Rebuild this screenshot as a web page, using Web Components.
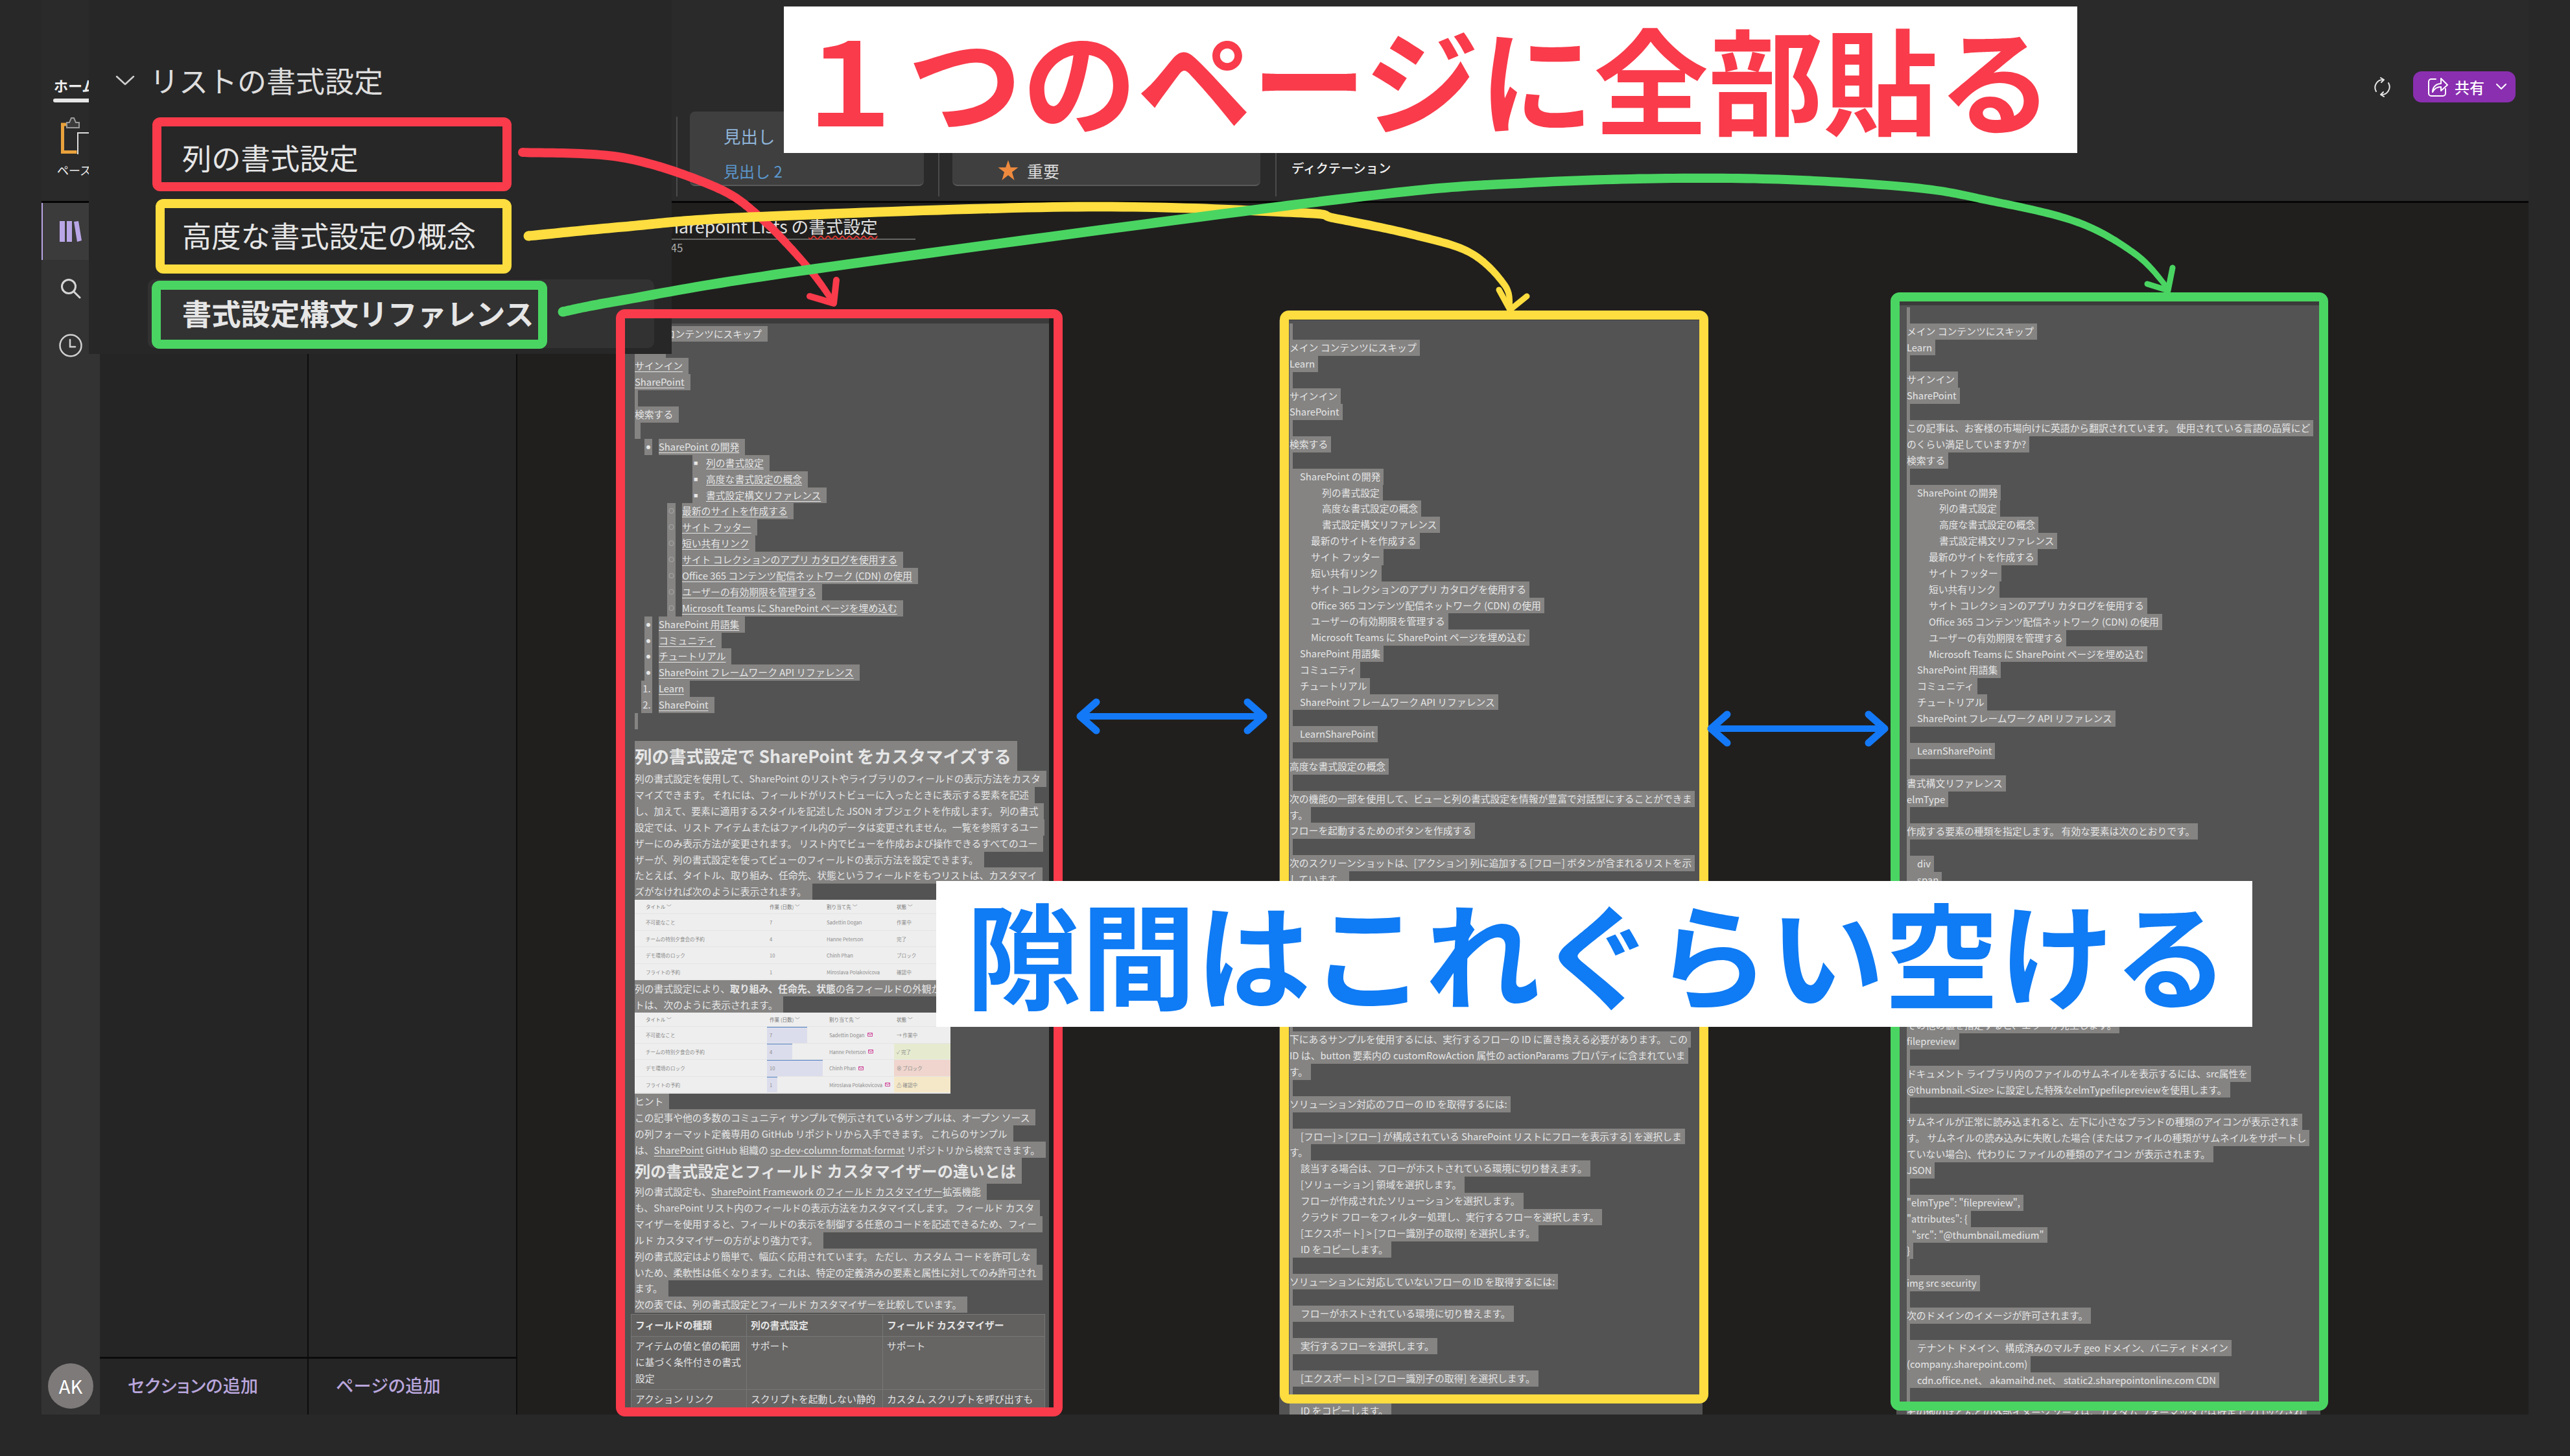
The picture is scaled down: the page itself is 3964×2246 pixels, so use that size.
<!DOCTYPE html>
<html lang="ja">
<head>
<meta charset="utf-8">
<title>OneNote</title>
<style>
  html, body { margin: 0; padding: 0; background: #282828; }
  body { width: 3964px; height: 2246px; overflow: hidden; position: relative; font-family: "Noto Sans CJK JP", "Noto Sans", sans-serif; color: #e4e4e4; }
  u { text-underline-offset: 3px; text-decoration-thickness: 1px; }
</style>
</head>
<body>

<one-app>
  <top-ribbon slot="ribbon"></top-ribbon>
  <nav-rail slot="rail"></nav-rail>
  <nav-col slot="sections" label="セクションの追加"></nav-col>
  <nav-col slot="pages" label="ページの追加" pad="42"></nav-col>
  <page-area slot="page">

    <paste-column style="--w:661px;--top:27px;--strip:8px;--pt:3.6px;--row:24.9px;--pr:9px;--edge:6px">
      <sel-line>メイン コンテンツにスキップ</sel-line>
      <sel-line>Learn</sel-line>
      <sel-line><u>サインイン</u></sel-line>
      <sel-line><u>SharePoint</u></sel-line>
      <sel-line blank></sel-line>
      <sel-line>検索する</sel-line>
      <sel-line blank style="--stub:9px"></sel-line>
      <sel-line level="1" mk="●"><u>SharePoint の開発</u></sel-line>
      <sel-line level="3" mk="■"><u>列の書式設定</u></sel-line>
      <sel-line level="3" mk="■"><u>高度な書式設定の概念</u></sel-line>
      <sel-line level="3" mk="■"><u>書式設定構文リファレンス</u></sel-line>
      <sel-line level="2" mk="○"><u>最新のサイトを作成する</u></sel-line>
      <sel-line level="2" mk="○"><u>サイト フッター</u></sel-line>
      <sel-line level="2" mk="○"><u>短い共有リンク</u></sel-line>
      <sel-line level="2" mk="○"><u>サイト コレクションのアプリ カタログを使用する</u></sel-line>
      <sel-line level="2" mk="○"><u>Office 365 コンテンツ配信ネットワーク (CDN) の使用</u></sel-line>
      <sel-line level="2" mk="○"><u>ユーザーの有効期限を管理する</u></sel-line>
      <sel-line level="2" mk="○"><u>Microsoft Teams に SharePoint ページを埋め込む</u></sel-line>
      <sel-line level="1" mk="●"><u>SharePoint 用語集</u></sel-line>
      <sel-line level="1" mk="●"><u>コミュニティ</u></sel-line>
      <sel-line level="1" mk="●"><u>チュートリアル</u></sel-line>
      <sel-line level="1" mk="●"><u>SharePoint フレームワーク API リファレンス</u></sel-line>
      <sel-line level="4" mk="1."><u>Learn</u></sel-line>
      <sel-line level="4" mk="2."><u>SharePoint</u></sel-line>
      <sel-line blank></sel-line>
      <div style="height:18.5px"></div>
      <sel-line style="--row:46px;font-size:26.5px;font-weight:700">列の書式設定で SharePoint をカスタマイズする</sel-line>
      <div style="--row:24.85px">
        <sel-line>列の書式設定を使用して、SharePoint のリストやライブラリのフィールドの表示方法をカスタ</sel-line>
        <sel-line>マイズできます。 それには、フィールドがリストビューに入ったときに表示する要素を記述</sel-line>
        <sel-line>し、加えて、要素に適用するスタイルを記述した JSON オブジェクトを作成します。 列の書式</sel-line>
        <sel-line>設定では、リスト アイテムまたはファイル内のデータは変更されません。一覧を参照するユー</sel-line>
        <sel-line>ザーにのみ表示方法が変更されます。 リスト内でビューを作成および操作できるすべてのユー</sel-line>
        <sel-line>ザーが、列の書式設定を使ってビューのフィールドの表示方法を設定できます。</sel-line>
        <sel-line>たとえば、タイトル、取り組み、任命先、状態というフィールドをもつリストは、カスタマイ</sel-line>
        <sel-line>ズがなければ次のように表示されます。</sel-line>
      </div>
      <mini-list></mini-list>
      <div style="--row:25px">
        <sel-line>列の書式設定により、<b>取り組み、任命先、状態</b>の各フィールドの外観が変更され、リス</sel-line>
        <sel-line>トは、次のように表示されます。</sel-line>
      </div>
      <mini-list fancy></mini-list>
      <sel-line style="--row:24px">ヒント</sel-line>
      <div style="--row:25px">
        <sel-line>この記事や他の多数のコミュニティ サンプルで例示されているサンプルは、オープン ソース</sel-line>
        <sel-line>の列フォーマット定義専用の GitHub リポジトリから入手できます。 これらのサンプル</sel-line>
        <sel-line>は、<u>SharePoint</u> GitHub 組織の <u>sp-dev-column-format-format</u> リポジトリから検索できます。</sel-line>
      </div>
      <sel-line style="--row:40px;font-size:24.3px;font-weight:700">列の書式設定とフィールド カスタマイザーの違いとは</sel-line>
      <div style="--row:24.9px">
        <sel-line>列の書式設定も、<u>SharePoint Framework のフィールド カスタマイザー</u>拡張機能</sel-line>
        <sel-line>も、SharePoint リスト内のフィールドの表示方法をカスタマイズします。 フィールド カスタ</sel-line>
        <sel-line>マイザーを使用すると、フィールドの表示を制御する任意のコードを記述できるため、フィー</sel-line>
        <sel-line>ルド カスタマイザーの方がより強力です。</sel-line>
        <sel-line>列の書式設定はより簡単で、幅広く応用されています。 ただし、カスタム コードを許可しな</sel-line>
        <sel-line>いため、柔軟性は低くなります。これは、特定の定義済みの要素と属性に対してのみ許可され</sel-line>
        <sel-line>ます。</sel-line>
        <sel-line>次の表では、列の書式設定とフィールド カスタマイザーを比較しています。</sel-line>
      </div>
      <compare-table></compare-table>
    </paste-column>

    <paste-column style="--w:653px;--top:29px;--gap:349px;--strip:1px;--pt:5.2px;--row:24.85px;--pr:5px">
      <sel-line blank></sel-line>
      <sel-line>メイン コンテンツにスキップ</sel-line>
      <sel-line>Learn</sel-line>
      <sel-line blank></sel-line>
      <sel-line>サインイン</sel-line>
      <sel-line>SharePoint</sel-line>
      <sel-line blank></sel-line>
      <sel-line>検索する</sel-line>
      <sel-line blank></sel-line>
      <sel-line i="16">SharePoint の開発</sel-line>
      <sel-line i="50">列の書式設定</sel-line>
      <sel-line i="50">高度な書式設定の概念</sel-line>
      <sel-line i="50">書式設定構文リファレンス</sel-line>
      <sel-line i="33">最新のサイトを作成する</sel-line>
      <sel-line i="33">サイト フッター</sel-line>
      <sel-line i="33">短い共有リンク</sel-line>
      <sel-line i="33">サイト コレクションのアプリ カタログを使用する</sel-line>
      <sel-line i="33">Office 365 コンテンツ配信ネットワーク (CDN) の使用</sel-line>
      <sel-line i="33">ユーザーの有効期限を管理する</sel-line>
      <sel-line i="33">Microsoft Teams に SharePoint ページを埋め込む</sel-line>
      <sel-line i="16">SharePoint 用語集</sel-line>
      <sel-line i="16">コミュニティ</sel-line>
      <sel-line i="16">チュートリアル</sel-line>
      <sel-line i="16">SharePoint フレームワーク API リファレンス</sel-line>
      <sel-line blank></sel-line>
      <sel-line i="16">LearnSharePoint</sel-line>
      <sel-line blank></sel-line>
      <sel-line>高度な書式設定の概念</sel-line>
      <sel-line blank></sel-line>
      <sel-line>次の機能の一部を使用して、ビューと列の書式設定を情報が豊富で対話型にすることができま</sel-line>
      <sel-line>す。</sel-line>
      <sel-line>フローを起動するためのボタンを作成する</sel-line>
      <sel-line blank></sel-line>
      <sel-line>次のスクリーンショットは、[アクション] 列に追加する [フロー] ボタンが含まれるリストを示</sel-line>
      <sel-line>しています。</sel-line>
      <sel-line blank style="--row:222.5px"></sel-line>
      <div style="--row:24.9px">
        <sel-line>下にあるサンプルを使用するには、実行するフローの ID に置き換える必要があります。 この</sel-line>
        <sel-line>ID は、button 要素内の customRowAction 属性の actionParams プロパティに含まれていま</sel-line>
        <sel-line>す。</sel-line>
        <sel-line blank></sel-line>
        <sel-line>ソリューション対応のフローの ID を取得するには:</sel-line>
        <sel-line blank></sel-line>
        <sel-line i="17">[フロー] > [フロー] が構成されている SharePoint リストにフローを表示する] を選択しま</sel-line>
        <sel-line>す。</sel-line>
        <sel-line i="17">該当する場合は、フローがホストされている環境に切り替えます。</sel-line>
        <sel-line i="17">[ソリューション] 領域を選択します。</sel-line>
        <sel-line i="17">フローが作成されたソリューションを選択します。</sel-line>
        <sel-line i="17">クラウド フローをフィルター処理し、実行するフローを選択します。</sel-line>
        <sel-line i="17">[エクスポート] > [フロー識別子の取得] を選択します。</sel-line>
        <sel-line i="17">ID をコピーします。</sel-line>
        <sel-line blank></sel-line>
        <sel-line>ソリューションに対応していないフローの ID を取得するには:</sel-line>
        <sel-line blank></sel-line>
        <sel-line i="17">フローがホストされている環境に切り替えます。</sel-line>
        <sel-line blank></sel-line>
        <sel-line i="17">実行するフローを選択します。</sel-line>
        <sel-line blank></sel-line>
        <sel-line i="17">[エクスポート] > [フロー識別子の取得] を選択します。</sel-line>
        <sel-line blank></sel-line>
        <sel-line i="17">ID をコピーします。</sel-line>
      </div>
    </paste-column>

    <paste-column style="--w:654px;--top:0px;--gap:299px;--strip:7px;--pt:2.8px;--row:24.9px;--pr:5px">
      <sel-line blank></sel-line>
      <sel-line>メイン コンテンツにスキップ</sel-line>
      <sel-line>Learn</sel-line>
      <sel-line blank></sel-line>
      <sel-line>サインイン</sel-line>
      <sel-line>SharePoint</sel-line>
      <sel-line blank></sel-line>
      <sel-line>この記事は、お客様の市場向けに英語から翻訳されています。 使用されている言語の品質にど</sel-line>
      <sel-line>のくらい満足していますか?</sel-line>
      <sel-line>検索する</sel-line>
      <sel-line blank></sel-line>
      <sel-line i="16">SharePoint の開発</sel-line>
      <sel-line i="50">列の書式設定</sel-line>
      <sel-line i="50">高度な書式設定の概念</sel-line>
      <sel-line i="50">書式設定構文リファレンス</sel-line>
      <sel-line i="34">最新のサイトを作成する</sel-line>
      <sel-line i="34">サイト フッター</sel-line>
      <sel-line i="34">短い共有リンク</sel-line>
      <sel-line i="34">サイト コレクションのアプリ カタログを使用する</sel-line>
      <sel-line i="34">Office 365 コンテンツ配信ネットワーク (CDN) の使用</sel-line>
      <sel-line i="34">ユーザーの有効期限を管理する</sel-line>
      <sel-line i="34">Microsoft Teams に SharePoint ページを埋め込む</sel-line>
      <sel-line i="16">SharePoint 用語集</sel-line>
      <sel-line i="16">コミュニティ</sel-line>
      <sel-line i="16">チュートリアル</sel-line>
      <sel-line i="16">SharePoint フレームワーク API リファレンス</sel-line>
      <sel-line blank></sel-line>
      <sel-line i="16">LearnSharePoint</sel-line>
      <sel-line blank></sel-line>
      <sel-line>書式構文リファレンス</sel-line>
      <sel-line>elmType</sel-line>
      <sel-line blank></sel-line>
      <sel-line>作成する要素の種類を指定します。 有効な要素は次のとおりです。</sel-line>
      <sel-line blank></sel-line>
      <sel-line i="16">div</sel-line>
      <sel-line i="16">span</sel-line>
      <sel-line i="16">a</sel-line>
      <sel-line i="16">img</sel-line>
      <sel-line i="16">svg</sel-line>
      <sel-line i="16">path</sel-line>
      <sel-line i="16">button</sel-line>
      <sel-line i="16">p</sel-line>
      <sel-line i="16">filepreview</sel-line>
      <sel-line blank></sel-line>
      <sel-line>その他の値を指定すると、エラーが発生します。</sel-line>
      <sel-line>filepreview</sel-line>
      <sel-line blank></sel-line>
      <sel-line>ドキュメント ライブラリ内のファイルのサムネイルを表示するには、src属性を</sel-line>
      <sel-line>@thumbnail.&lt;Size&gt; に設定した特殊なelmTypefilepreviewを使用します。</sel-line>
      <sel-line blank></sel-line>
      <sel-line>サムネイルが正常に読み込まれると、左下に小さなブランドの種類のアイコンが表示されま</sel-line>
      <sel-line>す。 サムネイルの読み込みに失敗した場合 (またはファイルの種類がサムネイルをサポートし</sel-line>
      <sel-line>ていない場合)、代わりに ファイルの種類のアイコン が表示されます。</sel-line>
      <sel-line>JSON</sel-line>
      <sel-line blank></sel-line>
      <sel-line>"elmType": "filepreview",</sel-line>
      <sel-line>"attributes": {</sel-line>
      <sel-line i="8">"src": "@thumbnail.medium"</sel-line>
      <sel-line>}</sel-line>
      <sel-line blank></sel-line>
      <sel-line>img src security</sel-line>
      <sel-line blank></sel-line>
      <sel-line>次のドメインのイメージが許可されます。</sel-line>
      <sel-line blank></sel-line>
      <sel-line i="16">テナント ドメイン、構成済みのマルチ geo ドメイン、バニティ ドメイン</sel-line>
      <sel-line>(company.sharepoint.com)</sel-line>
      <sel-line i="16">cdn.office.net、 akamaihd.net、 static2.sharepointonline.com CDN</sel-line>
      <sel-line blank></sel-line>
      <sel-line>その他のほとんどの外部イメージ ソースは、カスタム フォーマッタでは既定でブロックされ</sel-line>
    </paste-column>

  </page-area>
</one-app>

<flyout-panel title-text="リストの書式設定">
  <flyout-row>列の書式設定</flyout-row>
  <flyout-row>高度な書式設定の概念</flyout-row>
  <flyout-row selected>書式設定構文リファレンス</flyout-row>
</flyout-panel>

<note-layer></note-layer>

<script>
function makeShadow(el, html) {
    const root = el.attachShadow({ mode: "open" });
    root.innerHTML = html;
    return root;
}

class OneApp extends HTMLElement {
    constructor() {
        super();
        makeShadow(this, `
            <style>
                :host { display: flex; flex-direction: column; width: 3900px; height: 2182px; margin-left: 0; padding-left: 64px; box-sizing: border-box; }
                .bar { height: 310px; flex: none; }
                .body { flex: 1; min-height: 0; display: flex; border-top: 3px solid #050505; }
            </style>
            <div class="bar"><slot name="ribbon"></slot></div>
            <div class="body">
                <slot name="rail"></slot>
                <slot name="sections"></slot>
                <slot name="pages"></slot>
                <slot name="page"></slot>
            </div>
        `);
    }
}

class TopRibbon extends HTMLElement {
    constructor() {
        super();
        makeShadow(this, `
            <style>
                :host { display: flex; align-items: flex-start; height: 310px; background: #2a2a2a; }
                .tools { width: 979px; flex: none; padding-left: 19px; box-sizing: border-box; color: #eee; }
                .tab { margin-top: 120px; font-size: 22px; line-height: 22px; font-weight: 700; white-space: nowrap; }
                .tab-bar { margin-top: 10px; height: 6px; width: 60px; border-radius: 3px; background: #e6e6e6; margin-left: -1px; }
                .paste { display: block; margin: 22px 0 0 11px; }
                .paste-label { margin: 14px 0 0 5px; font-size: 18px; line-height: 20px; white-space: nowrap; }
                .sep { flex: none; width: 2px; height: 123px; margin-top: 180px; background: #4b4b4b; }
                .box { flex: none; margin-top: 172px; height: 115px; box-sizing: border-box; background: #3f3f3f; border-radius: 8px; border-bottom: 2px solid #5a5a5a; }
                .heads { width: 361px; margin-left: 19px; padding-left: 52px; font-size: 26.5px; }
                .heads div:first-child { height: 76px; line-height: 76px; color: #8fb5da; }
                .heads div:last-child { height: 32px; line-height: 32px; color: #5b97cd; font-size: 24px; }
                .tags { width: 475px; margin-left: 20px; padding: 68px 0 0 70px; display: flex; align-items: center; height: 115px; }
                .tags span { margin-left: 13px; font-size: 25px; line-height: 38px; color: #ddd; }
                .dict { margin: 246px 0 0 23px; font-size: 19.4px; line-height: 26px; color: #f2f2f2; font-weight: 500; white-space: nowrap; }
                .right { margin-left: auto; margin-top: 110px; display: flex; align-items: center; gap: 34px; padding-right: 20px; }
                .share { width: 158px; height: 48px; border-radius: 13px; background: #8a2fb0; color: #fff; display: flex; align-items: center; box-sizing: border-box; padding-left: 22px; font-size: 23px; font-weight: 500; }
                .share b { font-weight: 500; margin: 0 18px 0 10px; }
            </style>
            <div class="tools">
                <div class="tab">ホーム</div>
                <div class="tab-bar"></div>
                <svg class="paste" width="60" height="58" viewBox="0 0 60 58" fill="none">
                    <path d="M9 12H2.500v42.500h22" stroke="#e8a23c" stroke-width="5"/>
                    <path d="M9 17V9h4l3-7h4l3 7h5v8z" stroke="#9a9a9a" stroke-width="2" fill="#3a3a3a"/>
                    <path d="M26 58V25h24v33" stroke="#ddd" stroke-width="2"/>
                </svg>
                <div class="paste-label">ペースト</div>
            </div>
            <div class="sep"></div>
            <div class="box heads"><div>見出し&emsp;1</div><div>見出し 2</div></div>
            <div class="sep" style="margin-left:22px"></div>
            <div class="box tags">
                <svg width="32" height="31" viewBox="0 0 30 30"><path fill="#ee8a3e" d="M15 0l3.700 11H30l-9.200 6.800L24.300 30 15 22.400 5.700 30l3.500-12.200L0 11h11.300z"/></svg>
                <span>重要</span>
            </div>
            <div class="sep" style="margin-left:23px"></div>
            <div class="dict">ディクテーション</div>
            <div class="right">
                <svg width="27" height="31" viewBox="0 0 27 31" fill="none" stroke="#e6e6e6" stroke-width="2" stroke-linecap="round" stroke-linejoin="round">
                    <path d="M4 22A12 12 0 0 1 15 4"/><path d="M11 1l5 3-4 4"/>
                    <path d="M23 9a12 12 0 0 1-11 18"/><path d="M16 30l-5-3 4-4"/>
                </svg>
                <div class="share">
                    <svg width="32" height="30" viewBox="0 0 32 30" fill="none" stroke="#fff" stroke-width="2" stroke-linecap="round" stroke-linejoin="round">
                        <path d="M13 3H6a4 4 0 0 0-4 4v18a4 4 0 0 0 4 4h18a4 4 0 0 0 4-4v-7"/>
                        <path d="M8 23c0-8 6-13 13-13V2l10 10-10 9v-6c-6 0-10 2-13 8z"/>
                    </svg>
                    <b>共有</b>
                    <svg width="16" height="10" viewBox="0 0 16 10" fill="none" stroke="#fff" stroke-width="2" stroke-linecap="round" stroke-linejoin="round"><path d="M1 1l7 7 7-7"/></svg>
                </div>
            </div>
        `);
    }
}

class NavRail extends HTMLElement {
    constructor() {
        super();
        makeShadow(this, `
            <style>
                :host { display: flex; flex-direction: column; width: 90px; flex: none; background: #333; box-sizing: border-box; }
                .item { height: 88px; display: flex; align-items: center; justify-content: center; flex: none; }
                .on { background: #3b3b3b; box-shadow: inset 2px 0 0 #b9a6e6; }
                .avatar { margin: auto 0 9px 10px; width: 70px; height: 70px; border-radius: 50%; background: #7d7a79; color: #fff; display: flex; align-items: center; justify-content: center; font-size: 29px; padding-bottom: 3px; box-sizing: border-box; }
            </style>
            <div class="item on">
                <svg width="34" height="32" viewBox="0 0 34 32" fill="#b9a6e6"><rect width="8" height="32"/><rect x="11" width="8" height="32"/><path d="M22 1l7-1 5 30-7 2z"/></svg>
            </div>
            <div class="item">
                <svg width="32" height="32" viewBox="0 0 32 32" fill="none" stroke="#d6d6d6" stroke-width="3" stroke-linecap="round"><circle cx="13" cy="13" r="10.500"/><path d="M21 21l9 9"/></svg>
            </div>
            <div class="item">
                <svg width="36" height="36" viewBox="0 0 36 36" fill="none" stroke="#d0d0d0" stroke-width="2.500" stroke-linecap="round"><circle cx="18" cy="18" r="16.500"/><path d="M17 9v11h8"/></svg>
            </div>
            <div class="avatar">AK</div>
        `);
    }
}

class NavCol extends HTMLElement {
    constructor() {
        super();
        const pad = this.getAttribute("pad") || "43";
        makeShadow(this, `
            <style>
                :host { display: flex; flex-direction: column; flex: none; width: 322px; box-sizing: border-box; background: #252525; border-right: 2px solid #0c0c0c; }
                .body { flex: 1; }
                .foot { height: 89px; flex: none; box-sizing: border-box; border-top: 3px solid #0c0c0c; display: flex; align-items: center; padding: 0 0 5px ${pad}px; color: #b9a6dc; font-size: 27px; font-weight: 500; white-space: nowrap; font-feature-settings: "palt"; letter-spacing: .3px; }
            </style>
            <div class="body"></div>
            <div class="foot">${this.getAttribute("label")}</div>
        `);
    }
}

class PageArea extends HTMLElement {
    constructor() {
        super();
        makeShadow(this, `
            <style>
                :host { display: flex; flex-direction: column; flex: 1; min-width: 0; height: 100%; background: #201f1e; overflow: hidden; }
                .title { margin: 17px 0 0 203px; width: 411px; height: 38px; line-height: 38px; font-size: 26.600px; color: #e2e2e2; border-bottom: 2px solid #666; white-space: nowrap; flex: none; box-sizing: content-box; padding-left: 0; text-indent: 14px; }
                .title em { font-style: normal; text-decoration: underline wavy #e2342f 1.500px; text-underline-offset: 3px; }
                .stamp { margin-left: 213px; height: 24px; line-height: 24px; font-size: 17px; color: #aaa; flex: none; }
                .row { display: flex; align-items: flex-start; padding-left: 165px; margin-top: 70px; }
            </style>
            <div class="title">Sharepoint Lists の<em>書式設定</em></div>
            <div class="stamp">12:45</div>
            <div class="row"><slot></slot></div>
        `);
    }
}

class PasteColumn extends HTMLElement {
    constructor() {
        super();
        makeShadow(this, `
            <style>
                :host { display: block; flex: none; width: var(--w); box-sizing: border-box; margin-top: var(--top); margin-left: var(--gap, 0); background: #535353; border-right: var(--edge, 0) solid #1f1f1f; font-size: 14.800px; color: #e6e6e6; }
                .strip { height: var(--strip); background: #3b3b3b; }
                .body { padding: var(--pt) 0 0 16px; }
            </style>
            <div class="strip"></div>
            <div class="body"><slot></slot></div>
        `);
    }
}

class SelLine extends HTMLElement {
    constructor() {
        super();
        const root = makeShadow(this, `
            <style>
                :host { display: block; height: var(--row); white-space: nowrap; }
                .line { display: flex; height: 100%; }
                .mk { display: none; height: 100%; line-height: var(--row); background: #858483; text-align: center; flex: none; font-size: 6.500px; }
                .hl { display: block; height: 100%; line-height: var(--row); background: #858483; padding-right: var(--pr); }
                :host([blank]) .hl { padding: 0; width: var(--stub, 5px); }
                :host([level]) .mk { display: block; }
                :host([level="1"]) .mk { margin-left: 15px; width: 12px; }
                :host([level="1"]) .hl { margin-left: 10px; }
                :host([level="2"]) .mk { margin-left: 50px; width: 13px; font-size: 8px; }
                :host([level="2"]) .hl { margin-left: 10px; }
                :host([level="3"]) .mk { margin-left: 89px; width: 21px; text-align: left; padding-left: 2px; box-sizing: border-box; }
                :host([level="4"]) .mk { margin-left: 10px; width: 17px; font-size: 14.800px; }
                :host([level="4"]) .hl { margin-left: 10px; }
            </style>
            <div class="line"><span class="mk"></span><span class="hl"><slot></slot></span></div>
        `);
        root.querySelector(".mk").textContent = this.getAttribute("mk") || "";
        if (this.hasAttribute("i")) {
            root.querySelector(".hl").style.paddingLeft = this.getAttribute("i") + "px";
        }
    }
}

const LIST_ROWS = [
    { title: "不可能なこと", days: "7", bar: 62, who: "Sadettin Dogan", state: "作業中", icon: "→", tint: "transparent" },
    { title: "チームの特別夕食会の予約", days: "4", bar: 39, who: "Hanne Peterson", state: "完了", icon: "✓", tint: "#e6ebd0" },
    { title: "デモ環境のロック", days: "10", bar: 86, who: "Chinh Phan", state: "ブロック", icon: "⊗", tint: "#efd5cd" },
    { title: "フライトの予約", days: "1", bar: 16, who: "Miroslava Polakovicova", state: "確認中", icon: "⚠", tint: "#f5e8c8" },
];

class MiniList extends HTMLElement {
    constructor() {
        super();
        const fancy = this.hasAttribute("fancy");
        const mail = `<svg class="mail" width="8" height="6" viewBox="0 0 8 6" fill="none" stroke="#d0479a"><path d="M.5.5h7v5h-7zM.5 1l3.500 2.500L7.500 1"/></svg>`;
        const rows = LIST_ROWS.map((r) => `
            <div class="cell t">${r.title}</div>
            <div class="cell n">${fancy ? `<i style="width:${r.bar}px"></i>` : ""}<span>${r.days}</span></div>
            <div class="cell p">${r.who}${fancy ? mail : ""}</div>
            <div class="cell s" style="background:${fancy ? r.tint : "transparent"}">${fancy ? r.icon + " " : ""}${r.state}</div>
        `).join("");
        makeShadow(this, `
            <style>
                :host { display: block; width: 487px; height: ${fancy ? 125 : 124}px; background: #eeeeee; color: #8c8c8c; font-size: 7.600px; overflow: hidden; }
                .grid { display: grid; grid-template-columns: 204px 92px 104px 87px; grid-template-rows: 22px repeat(4, 25.600px); }
                .cell { display: flex; align-items: center; white-space: nowrap; position: relative; border-bottom: 1px solid #e4e4e4; box-sizing: border-box; }
                .h { color: #777; }
                .t { padding-left: 17px; }
                .n { padding-left: 4px; }
                .n span { position: relative; }
                .n i { position: absolute; left: 0; top: 0; bottom: 0; background: #dcddec; border-top: 1px solid #4a7fc0; }
                .p { padding-left: ${fancy ? 4 : 0}px; }
                .s { padding-left: 4px; }
                .mail { margin-left: 4px; }
            </style>
            <div class="grid">
                <div class="cell t h">タイトル ﹀</div>
                <div class="cell n h">作業 (日数) ﹀</div>
                <div class="cell p h">割り当て先 ﹀</div>
                <div class="cell s h">状態 ﹀</div>
                ${rows}
            </div>
        `);
    }
}

class CompareTable extends HTMLElement {
    constructor() {
        super();
        makeShadow(this, `
            <style>
                :host { display: block; margin: 2px 0 0 -6px; width: 638px; }
                table { border-collapse: collapse; table-layout: fixed; width: 638px; font-size: 14.800px; line-height: 24.850px; color: #e4e4e4; background: #666564; }
                th, td { border: 1px solid #777; padding: 0 6px; text-align: left; vertical-align: top; }
                th { height: 33px; vertical-align: middle; background: #62615f; }
                td { padding-top: 2px; padding-bottom: 4px; }
            </style>
            <table>
                <colgroup><col style="width:178px"><col style="width:210px"><col style="width:250px"></colgroup>
                <tr><th>フィールドの種類</th><th>列の書式設定</th><th>フィールド カスタマイザー</th></tr>
                <tr><td>アイテムの値と値の範囲に基づく条件付きの書式設定</td><td>サポート</td><td>サポート</td></tr>
                <tr><td>アクション リンク</td><td>スクリプトを起動しない静的なリンク</td><td>カスタム スクリプトを呼び出すもの</td></tr>
            </table>
        `);
    }
}

class FlyoutPanel extends HTMLElement {
    constructor() {
        super();
        makeShadow(this, `
            <style>
                :host { display: flex; flex-direction: column; position: absolute; left: 137px; top: 0; width: 899px; height: 546px; background: #272727; box-sizing: border-box; padding-top: 98px; }
                .head { display: flex; align-items: center; height: 50px; margin-bottom: 43px; color: #dedede; font-size: 45px; white-space: nowrap; }
                .head svg { margin: 0 23px 0 41px; position: relative; top: 1px; }
                .rows { display: flex; flex-direction: column; gap: 14px; }
            </style>
            <div class="head">
                <svg width="30" height="16" viewBox="0 0 30 16" fill="none" stroke="#cfcfcf" stroke-width="2.500" stroke-linecap="round" stroke-linejoin="round"><path d="M2 2l13 12L28 2"/></svg>
                <span>${this.getAttribute("title-text")}</span>
            </div>
            <div class="rows"><slot></slot></div>
        `);
    }
}

class FlyoutRow extends HTMLElement {
    constructor() {
        super();
        makeShadow(this, `
            <style>
                :host { display: flex; align-items: center; height: 106px; margin-left: 91px; width: 781px; box-sizing: border-box; padding: 0 0 5px 53px; border-radius: 10px; font-size: 45.300px; color: #e6e6e6; white-space: nowrap; }
                :host([selected]) { background: #323232; font-weight: 700; }
            </style>
            <slot></slot>
        `);
    }
}

// smooth line through measured points, narrowing mostly towards its end
function taperedPath(points, startWidth, endWidth) {
    const samples = [];
    for (let i = 0; i < points.length - 1; i++) {
        const p0 = points[Math.max(i - 1, 0)];
        const p1 = points[i];
        const p2 = points[i + 1];
        const p3 = points[Math.min(i + 2, points.length - 1)];
        for (let s = 0; s < 24; s++) {
            const t = s / 24;
            const f = (a, b, c, d) => 0.5 * (2 * b + (c - a) * t + (2 * a - 5 * b + 4 * c - d) * t * t + (3 * b - a - 3 * c + d) * t * t * t);
            samples.push([f(p0[0], p1[0], p2[0], p3[0]), f(p0[1], p1[1], p2[1], p3[1])]);
        }
    }
    samples.push(points[points.length - 1]);
    const left = [];
    const right = [];
    samples.forEach((p, i) => {
        const a = samples[Math.max(i - 1, 0)];
        const b = samples[Math.min(i + 1, samples.length - 1)];
        const len = Math.hypot(b[0] - a[0], b[1] - a[1]) || 1;
        const u = i / (samples.length - 1);
        const w = (startWidth + (endWidth - startWidth) * u * u * u) / 2;
        const nx = -(b[1] - a[1]) / len * w;
        const ny = (b[0] - a[0]) / len * w;
        left.push((p[0] + nx).toFixed(1) + " " + (p[1] + ny).toFixed(1));
        right.unshift((p[0] - nx).toFixed(1) + " " + (p[1] - ny).toFixed(1));
    });
    return "M" + left.join("L") + "L" + right.join("L") + "Z";
}

function doubleArrow(x1, x2, y) {
    return `<path d="M${x1 + 8} ${y}H${x2 - 8}" stroke="#1479f6" stroke-width="10"/>
        <path d="M${x1 + 30} ${y - 22}L${x1 + 5} ${y}L${x1 + 30} ${y + 22}M${x2 - 30} ${y - 22}L${x2 - 5} ${y}L${x2 - 30} ${y + 22}" fill="none" stroke="#1479f6" stroke-width="11" stroke-linecap="round" stroke-linejoin="round"/>`;
}

class NoteLayer extends HTMLElement {
    constructor() {
        super();
        const RED = "#f93b4b";
        const YEL = "#fddd3f";
        const GRN = "#4ad562";
        const redLine = [[806, 235], [960, 243], [1100, 287], [1170, 333], [1244, 410], [1284, 464]];
        const yelLine = [[815, 364], [960, 350], [1156, 335], [1662, 319], [2000, 328], [2060, 337], [2179, 362], [2268, 390], [2321, 440], [2329, 475]];
        const grnLine = [[868, 481], [960, 463], [1255, 415], [2060, 308], [2357, 282], [2670, 275], [2937, 288], [3071, 310], [3205, 343], [3295, 393], [3344, 445]];
        makeShadow(this, `
            <style>
                :host { display: block; position: absolute; inset: 0; pointer-events: none; }
                svg { position: absolute; left: 0; top: 0; }
                .banner { position: absolute; background: #fff; display: flex; align-items: center; justify-content: center; font-weight: 700; white-space: nowrap; box-sizing: border-box; }
                .one { left: 1209px; top: 10px; width: 1995px; height: 226px; padding: 0 24px 10px 0; font-size: 177px; color: ${RED}; }
                .gap { left: 1444px; top: 1359px; width: 2030px; height: 225px; padding: 0 0 10px 10px; font-size: 177px; color: #0f7bf4; }
            </style>
            <svg width="3964" height="2246" viewBox="0 0 3964 2246" fill="none">
                <rect x="957" y="484" width="675" height="1694" rx="7" stroke="${RED}" stroke-width="14"/>
                <rect x="1981" y="486" width="647" height="1672" rx="7" stroke="${YEL}" stroke-width="14"/>
                <rect x="2923" y="458" width="661" height="1711" rx="7" stroke="${GRN}" stroke-width="14"/>
                <rect x="242" y="188" width="540" height="100" rx="5" stroke="${RED}" stroke-width="14"/>
                <rect x="247" y="314" width="535" height="101" rx="5" stroke="${YEL}" stroke-width="14"/>
                <rect x="241" y="440" width="596" height="91" rx="5" stroke="${GRN}" stroke-width="14"/>

                <circle cx="806" cy="235" r="7" fill="${RED}"/>
                <path d="${taperedPath(redLine, 14, 9)}" fill="${RED}"/>
                <path d="M1290 432L1286 468L1249 457" stroke="${RED}" stroke-width="10" stroke-linecap="round" stroke-linejoin="round"/>
                <circle cx="815" cy="364" r="7.500" fill="${YEL}"/>
                <path d="${taperedPath(yelLine, 15, 8)}" fill="${YEL}"/>
                <path d="M2312 447L2329 478L2355 457" stroke="${YEL}" stroke-width="9" stroke-linecap="round" stroke-linejoin="round"/>
                <circle cx="868" cy="481" r="7.500" fill="${GRN}"/>
                <path d="${taperedPath(grnLine, 15, 8)}" fill="${GRN}"/>
                <path d="M3351 413L3344 448L3312 438" stroke="${GRN}" stroke-width="9" stroke-linecap="round" stroke-linejoin="round"/>

                ${doubleArrow(1661, 1954, 1105)}
                ${doubleArrow(2634, 2912, 1124)}
            </svg>
            <div class="banner one">１つのページに全部貼る</div>
            <div class="banner gap">隙間はこれぐらい空ける</div>
        `);
    }
}

customElements.define("one-app", OneApp);
customElements.define("top-ribbon", TopRibbon);
customElements.define("nav-rail", NavRail);
customElements.define("nav-col", NavCol);
customElements.define("page-area", PageArea);
customElements.define("paste-column", PasteColumn);
customElements.define("sel-line", SelLine);
customElements.define("mini-list", MiniList);
customElements.define("compare-table", CompareTable);
customElements.define("flyout-panel", FlyoutPanel);
customElements.define("flyout-row", FlyoutRow);
customElements.define("note-layer", NoteLayer);
</script>
</body>
</html>
